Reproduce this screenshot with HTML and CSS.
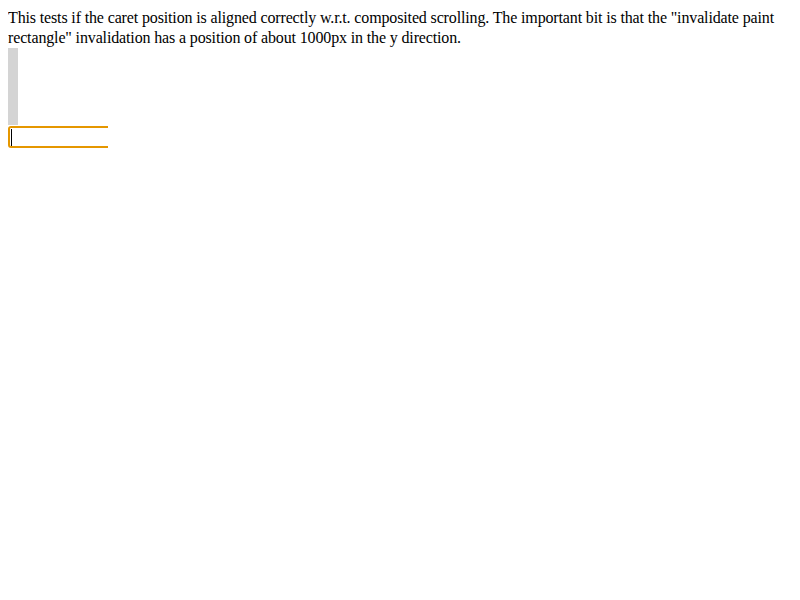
FILE: index.html
```html
<!DOCTYPE html>
<html>
<head>
<meta charset="utf-8">
<link rel="stylesheet" href="styles.css">
</head>
<body>
<p class="intro">This tests if the caret position is aligned correctly w.r.t. composited scrolling. The important bit is that the "invalidate paint rectangle" invalidation has a position of about 1000px in the y direction.</p>
<div class="bar"></div>
<div class="clip">
  <div class="field"><span class="caret"></span></div>
</div>
</body>
</html>
```
FILE: styles.css
```css
body {
  margin: 8px;
  font-family: "Liberation Serif", "Times New Roman", serif;
  font-size: 16px;
  color: #000;
  background: #fff;
}
.intro {
  margin: 0;
  line-height: 20px;
  letter-spacing: -0.14px;
}
.bar {
  width: 10px;
  height: 77px;
  background: #d4d4d4;
}
.clip {
  width: 100px;
  height: 22px;
  margin-top: 1px;
  overflow: hidden;
}
.field {
  box-sizing: border-box;
  width: 140px;
  height: 22px;
  border: 2px solid #e59700;
  border-radius: 3px;
  padding: 1px 0 0 1px;
}
.caret {
  display: block;
  width: 1px;
  height: 17px;
  background: #000;
}
```
